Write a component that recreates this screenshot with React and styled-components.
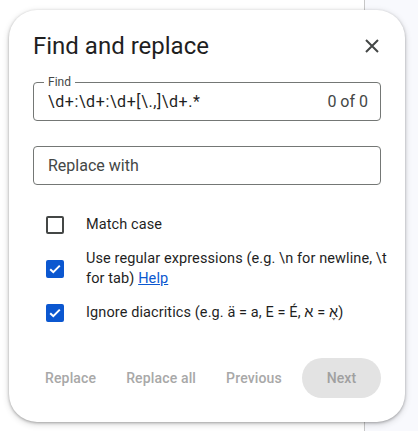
import styled, { createGlobalStyle } from 'styled-components';

const GlobalStyle = createGlobalStyle`
  html, body {
    margin: 0;
    padding: 0;
    width: 418px;
    height: 431px;
    overflow: hidden;
    font-family: Roboto, "Noto Sans", Arial, sans-serif;
    color: #1f1f1f;
  }
`;

const Page = styled.div`
  position: relative;
  display: flex;
  width: 418px;
  height: 431px;
`;

const DocArea = styled.div`
  width: 364px;
  background: #ffffff;
  border-right: 1px solid #c7c7c7;
`;

const SideArea = styled.div`
  flex: 1;
  background: #f8f9fd;
`;

// dialog floats over the document
const Dialog = styled.div`
  position: absolute;
  left: 9px;
  top: 10px;
  width: 396px;
  height: 412px;
  box-sizing: border-box;
  padding: 0 24px;
  background: #fff;
  border-radius: 28px;
  box-shadow: 0 1px 3px rgba(0, 0, 0, 0.3), 0 2px 6px 1px rgba(0, 0, 0, 0.12);
  display: flex;
  flex-direction: column;
`;

const Header = styled.div`
  display: flex;
  align-items: center;
  justify-content: space-between;
  height: 72px;
`;

const Title = styled.h1`
  margin: 0;
  font-size: 24px;
  font-weight: 400;
`;

const CloseButton = styled.button`
  border: none;
  background: none;
  padding: 0;
  width: 24px;
  height: 24px;
  margin-right: -3px;
  display: flex;
  align-items: center;
  justify-content: center;
  cursor: pointer;
`;

const Field = styled.div`
  position: relative;
  height: 39px;
  box-sizing: border-box;
  border: 1px solid #747775;
  border-radius: 4px;
  display: flex;
  align-items: center;
  padding: 0 12px 0 14px;
  margin-top: ${(p) => p.$mt || 0}px;
  font-size: 16px;
`;

const Legend = styled.span`
  position: absolute;
  top: -8px;
  left: 10px;
  padding: 0 4px;
  background: #fff;
  font-size: 12px;
  line-height: 14px;
  color: #444746;
`;

const Value = styled.span`
  flex: 1;
  color: #1f1f1f;
  letter-spacing: 0.6px;
`;

const Placeholder = styled.span`
  flex: 1;
  color: #444746;
`;

const Count = styled.span`
  color: #444746;
`;

const Options = styled.div`
  display: flex;
  flex-direction: column;
  gap: 14px;
  margin: 30px -14px 0 0;
  padding-left: 13px;
`;

const Option = styled.label`
  display: flex;
  align-items: center;
  gap: 22px;
  font-size: 14.5px;
  letter-spacing: 0.1px;
  line-height: 20px;
`;

const Box = styled.span`
  flex: none;
  width: 18px;
  height: 18px;
  box-sizing: border-box;
  border-radius: 2px;
  border: 2px solid ${(p) => (p.$checked ? '#0b57d0' : '#444746')};
  background: ${(p) => (p.$checked ? '#0b57d0' : 'transparent')};
  display: flex;
  align-items: center;
  justify-content: center;
`;

const HelpLink = styled.a`
  color: #0b57d0;
  text-decoration: underline;
`;

const Actions = styled.div`
  display: flex;
  align-items: center;
  justify-content: space-between;
  margin-top: auto;
  margin-bottom: 24px;
  padding-left: 12px;
`;

const TextGroup = styled.div`
  display: flex;
  gap: 30px;
`;

const TextButton = styled.button`
  border: none;
  background: none;
  padding: 0;
  white-space: nowrap;
  font-family: inherit;
  font-size: 14px;
  font-weight: 500;
  letter-spacing: 0.15px;
  color: #a8a8a8;
`;

const PillButton = styled.button`
  flex: none;
  width: 79px;
  height: 40px;
  border: none;
  border-radius: 20px;
  background: #e3e3e3;
  font-family: inherit;
  font-size: 14px;
  font-weight: 500;
  letter-spacing: 0.15px;
  color: #a0a0a0;
`;

const Check = () => (
  <svg width="12" height="10" viewBox="0 0 12 10">
    <path d="M1.2 5.2 L4.3 8.2 L10.8 1.6" fill="none" stroke="#fff" strokeWidth="2" />
  </svg>
);

const CheckBox = ({ checked }) => <Box $checked={checked}>{checked && <Check />}</Box>;

export default function App() {
  return (
    <>
      <GlobalStyle />
      <Page>
        <DocArea />
        <SideArea />
        <Dialog>
          <Header>
            <Title>Find and replace</Title>
            <CloseButton aria-label="Close">
              <svg width="16" height="16" viewBox="0 0 16 16">
                <path d="M2 2 L14 14 M14 2 L2 14" stroke="#444746" strokeWidth="2" />
              </svg>
            </CloseButton>
          </Header>
          <Field>
            <Legend>Find</Legend>
            <Value>\d+:\d+:\d+[\.,]\d+.*</Value>
            <Count>0 of 0</Count>
          </Field>
          <Field $mt={25}>
            <Placeholder>Replace with</Placeholder>
          </Field>
          <Options>
            <Option>
              <CheckBox />
              <span>Match case</span>
            </Option>
            <Option>
              <CheckBox checked />
              <span>
                Use regular expressions (e.g. \n for newline, \t for tab){' '}
                <HelpLink href="#">Help</HelpLink>
              </span>
            </Option>
            <Option>
              <CheckBox checked />
              <span>
                Ignore diacritics (e.g. ä = a, E = É, <bdi>א</bdi> = <bdi>אֶ</bdi>)
              </span>
            </Option>
          </Options>
          <Actions>
            <TextGroup>
              <TextButton>Replace</TextButton>
              <TextButton>Replace all</TextButton>
              <TextButton>Previous</TextButton>
            </TextGroup>
            <PillButton>Next</PillButton>
          </Actions>
        </Dialog>
      </Page>
    </>
  );
}
